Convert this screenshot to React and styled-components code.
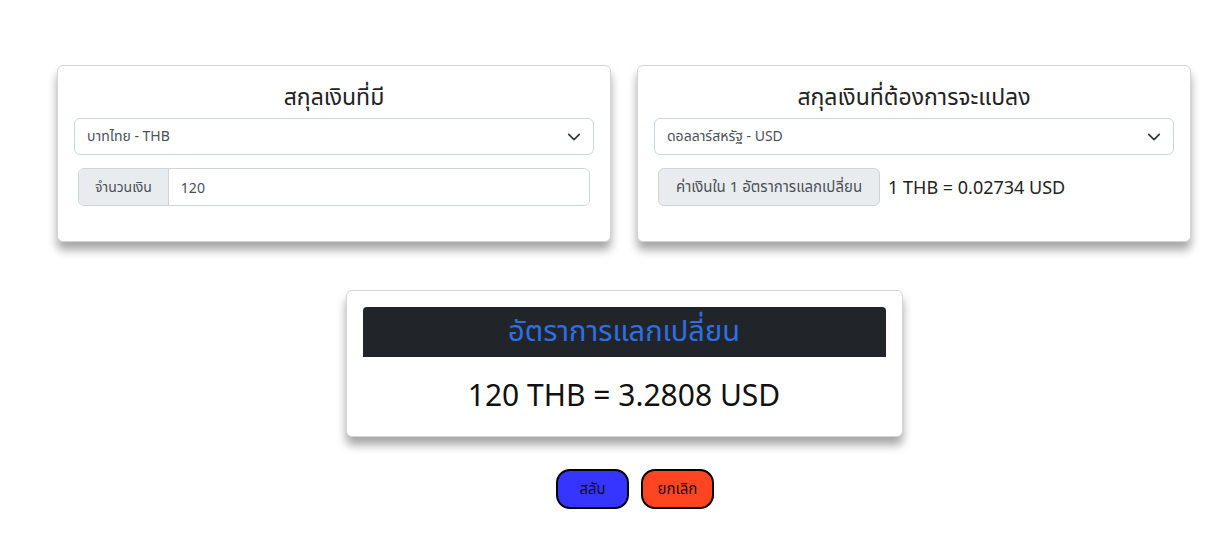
import React, { useState } from "react";
import styled, { createGlobalStyle } from "styled-components";

const GlobalStyle = createGlobalStyle`
  body {
    margin: 0;
    background: #fff;
    font-family: "Noto Sans", "Noto Sans Thai", Roboto, sans-serif;
    color: #212529;
  }
`;

const Page = styled.div`
  padding: 65px 25px 0 57px;
  display: flex;
  flex-direction: column;
  align-items: center;
`;

const Row = styled.div`
  width: 100%;
  display: grid;
  grid-template-columns: 1fr 1fr;
  gap: 26px;
`;

const Card = styled.div`
  background: #fff;
  border: 1px solid #d4d4d4;
  border-radius: 6px;
  box-shadow: 0 8px 10px rgba(0, 0, 0, 0.35);
  padding: 16px;
  width: ${(p) => p.$width || "auto"};
  box-sizing: border-box;
  height: ${(p) => p.$height || "auto"};
`;

const Title = styled.h2`
  margin: 0 0 8px;
  text-align: center;
  font-size: 23px;
  font-weight: 400;
  line-height: 28px;
  color: #222;
`;

const SelectBox = styled.div`
  height: 37px;
  border: 1px solid #ced4da;
  border-radius: 6px;
  display: flex;
  align-items: center;
  justify-content: space-between;
  padding: 0 12px;
  font-size: 14px;
  color: #495057;
  box-sizing: border-box;
`;

const InputGroup = styled.div`
  margin: 13px 4px 0;
  height: 38px;
  display: flex;
  border: 1px solid #ced4da;
  border-radius: 6px;
  overflow: hidden;
  box-sizing: border-box;
`;

const Addon = styled.span`
  background: #e9ecef;
  border-right: 1px solid #ced4da;
  display: flex;
  align-items: center;
  padding: 0 16px;
  font-size: 14px;
  color: #495057;
`;

const Field = styled.input`
  flex: 1;
  border: none;
  outline: none;
  padding: 0 12px;
  font: inherit;
  font-size: 14px;
  color: #495057;
`;

const RateRow = styled.div`
  margin: 13px 4px 0;
  display: flex;
  align-items: center;
  gap: 8px;
`;

const RateLabel = styled.span`
  height: 38px;
  display: flex;
  align-items: center;
  background: #e9ecef;
  border: 1px solid #ced4da;
  border-radius: 6px;
  padding: 0 17px;
  font-size: 15px;
  color: #495057;
  box-sizing: border-box;
`;

const RateText = styled.span`
  font-size: 18px;
  color: #222;
`;

const ResultWrap = styled.div`
  margin-top: 48px;
`;

const ResultHead = styled.div`
  background: #212529;
  height: 50px;
  border-radius: 4px 4px 0 0;
  display: flex;
  align-items: center;
  justify-content: center;
  color: #2e6fe6;
  font-size: 29px;
`;

const ResultText = styled.div`
  text-align: center;
  font-size: 30px;
  color: #111;
  padding-top: 17px;
`;

const Buttons = styled.div`
  margin: 32px 0 0 22px;
  display: flex;
  gap: 12px;
`;

const Btn = styled.button`
  width: 73px;
  height: 40px;
  border: 2px solid #000;
  border-radius: 14px;
  background: ${(p) => p.$bg};
  font: inherit;
  font-size: 15px;
  color: #111;
  cursor: pointer;
`;

const Chevron = () => (
  <svg width="14" height="14" viewBox="0 0 16 16">
    <path
      d="M2 5l6 6 6-6"
      fill="none"
      stroke="#343a40"
      strokeWidth="2"
      strokeLinecap="round"
      strokeLinejoin="round"
    />
  </svg>
);

export default function App() {
  const [amount, setAmount] = useState("120");
  return (
    <>
      <GlobalStyle />
      <Page>
        <Row>
          <Card $height="177px">
            <Title>สกุลเงินที่มี</Title>
            <SelectBox>
              <span>บาทไทย - THB</span>
              <Chevron />
            </SelectBox>
            <InputGroup>
              <Addon>จำนวนเงิน</Addon>
              <Field value={amount} onChange={(e) => setAmount(e.target.value)} />
            </InputGroup>
          </Card>
          <Card $height="177px">
            <Title>สกุลเงินที่ต้องการจะแปลง</Title>
            <SelectBox>
              <span>ดอลลาร์สหรัฐ - USD</span>
              <Chevron />
            </SelectBox>
            <RateRow>
              <RateLabel>ค่าเงินใน 1 อัตราการแลกเปลี่ยน</RateLabel>
              <RateText>1 THB = 0.02734 USD</RateText>
            </RateRow>
          </Card>
        </Row>
        <ResultWrap>
          <Card $width="557px" $height="147px">
            <ResultHead>อัตราการแลกเปลี่ยน</ResultHead>
            <ResultText>120 THB = 3.2808 USD</ResultText>
          </Card>
        </ResultWrap>
        <Buttons>
          <Btn $bg="#3535ff">สลับ</Btn>
          <Btn $bg="#ff4422">ยกเลิก</Btn>
        </Buttons>
      </Page>
    </>
  );
}
